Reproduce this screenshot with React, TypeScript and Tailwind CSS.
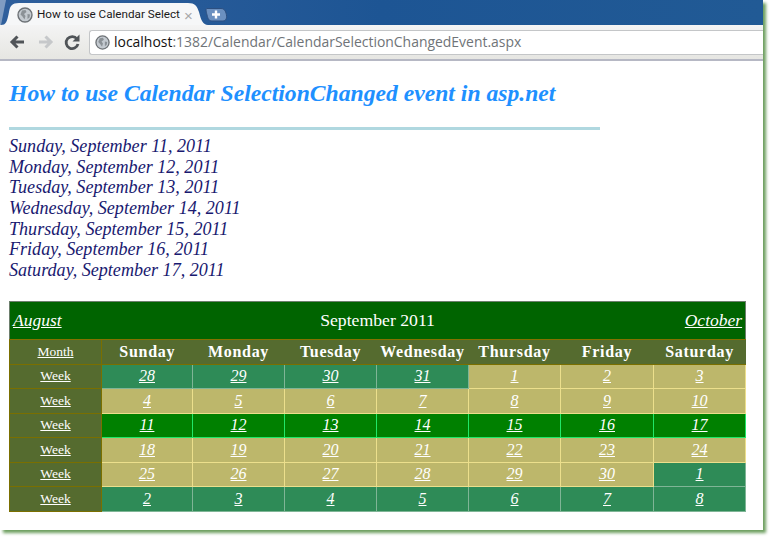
const dates = [
  "Sunday, September 11, 2011",
  "Monday, September 12, 2011",
  "Tuesday, September 13, 2011",
  "Wednesday, September 14, 2011",
  "Thursday, September 15, 2011",
  "Friday, September 16, 2011",
  "Saturday, September 17, 2011",
];

const days = ["Sunday", "Monday", "Tuesday", "Wednesday", "Thursday", "Friday", "Saturday"];

type Kind = "other" | "month" | "selected";

const weeks: { day: string; kind: Kind }[][] = [
  [
    { day: "28", kind: "other" },
    { day: "29", kind: "other" },
    { day: "30", kind: "other" },
    { day: "31", kind: "other" },
    { day: "1", kind: "month" },
    { day: "2", kind: "month" },
    { day: "3", kind: "month" },
  ],
  ["4", "5", "6", "7", "8", "9", "10"].map((day) => ({ day, kind: "month" as Kind })),
  ["11", "12", "13", "14", "15", "16", "17"].map((day) => ({ day, kind: "selected" as Kind })),
  ["18", "19", "20", "21", "22", "23", "24"].map((day) => ({ day, kind: "month" as Kind })),
  [
    { day: "25", kind: "month" },
    { day: "26", kind: "month" },
    { day: "27", kind: "month" },
    { day: "28", kind: "month" },
    { day: "29", kind: "month" },
    { day: "30", kind: "month" },
    { day: "1", kind: "other" },
  ],
  ["2", "3", "4", "5", "6", "7", "8"].map((day) => ({ day, kind: "other" as Kind })),
];

const cellStyles: Record<Kind, string> = {
  other: "bg-[#2e8b57] border-[#7fb596]",
  month: "bg-[#bdb76b] border-[#ecdf8c]",
  selected: "bg-[#008000] border-[#20e868]",
};

const Globe = ({ className }: { className: string }) => (
  <svg viewBox="0 0 16 16" className={className}>
    <circle cx="8" cy="8" r="7" fill="#c4cad0" stroke="#6d7276" strokeWidth="1.4" />
    <path d="M5 3.5 8.5 3 9.5 5 7 7 8.5 9 7.5 12.5 5.5 9.5 3.5 7.5Z" fill="#8b9196" />
    <path d="M10.5 7 13 7.5 12.5 10.5 10.5 12Z" fill="#8b9196" />
  </svg>
);

const BrowserChrome = () => (
  <div className="shrink-0">
    <div className="relative h-[25px] bg-gradient-to-r from-[#2f5f9c] via-[#1d5594] to-[#215a95]">
      <svg viewBox="0 0 230 25" className="absolute top-0 left-0 h-[25px] w-[230px]">
        <path d="M0 0H6L1 25H0Z" fill="#7f9cc2" />
        <path d="M1 25C6 25 7 22 9 12 10 6 12 3 19 3H188C195 3 197 6 199 12 201 20 203 25 208 25Z" fill="#f6f7f8" />
        <path d="M207 8.500H221C224 8.500 225 10 226 13 227.500 18 226 21 223 21H212C209 21 208 19 207 15 206 11 205.500 8.500 207 8.500Z" fill="#6b90c0" stroke="#2c4f80" />
        <path d="M216 10.500V18.500M212 14.500H220" stroke="#ffffff" strokeWidth="2.400" />
      </svg>
      <div className="absolute top-[5px] left-[17px] flex h-5 items-center gap-1">
        <Globe className="h-4 w-4" />
        <span className="w-[143px] text-[11.700px] whitespace-nowrap text-[#1a1a1a] [font-family:'Roboto',sans-serif]">
          How to use Calendar Select
        </span>
        <span className="text-[15px] leading-none text-[#a8a8a8] [font-family:'Liberation_Sans',sans-serif]">×</span>
      </div>
    </div>
    <div className="flex h-[36px] items-center border-b-2 border-[#b6b8c4] bg-gradient-to-b from-[#f4f4f4] to-[#e6e6e2]">
      <svg viewBox="0 0 80 20" className="ml-[8px] h-5 w-20 shrink-0">
        <path d="M16 10H4M9.500 4.500 4 10 9.500 15.500" fill="none" stroke="#505458" strokeWidth="3" />
        <path d="M31 10H43M37.500 4.500 43 10 37.500 15.500" fill="none" stroke="#c6c8ca" strokeWidth="3" />
        <path d="M69 7A6 6 0 1 0 70 12" fill="none" stroke="#505458" strokeWidth="2.800" />
        <path d="M71.500 2.500V9.500H64.500Z" fill="#505458" />
      </svg>
      <div className="ml-[1px] flex h-[25px] flex-1 items-center gap-1 rounded-l-[3px] border border-r-0 border-[#c4c6c8] bg-white pl-[5px]">
        <Globe className="h-[15px] w-[15px] shrink-0" />
        <span className="text-[13.940px] whitespace-nowrap text-[#6f7478] [font-family:'Open_Sans',sans-serif]">
          <span className="text-[#111]">localhost</span>:1382/Calendar/CalendarSelectionChangedEvent.aspx
        </span>
      </div>
    </div>
  </div>
);

const Calendar = () => (
  <table className="w-[736px] table-fixed border-collapse text-white [font-family:'Liberation_Serif',serif]">
    <colgroup>
      <col className="w-[92px]" />
      <col className="w-[91px]" />
      <col className="w-[92px]" />
      <col className="w-[92px]" />
      <col className="w-[92px]" />
      <col className="w-[92px]" />
      <col className="w-[93px]" />
      <col className="w-[92px]" />
    </colgroup>
    <tbody>
      <tr className="h-[38px] bg-[#006400]">
        <td colSpan={8} className="border border-[#6d7f6d] border-b-[#857000] p-0">
          <div className="grid grid-cols-3 items-center px-[3px] text-[17.500px] italic">
            <a className="justify-self-start underline">August</a>
            <span className="text-center text-[17.700px] not-italic">September 2011</span>
            <a className="justify-self-end underline">October</a>
          </div>
        </td>
      </tr>
      <tr className="h-[25px] bg-[#556b2f]">
        <td className="border border-[#7a6f00] p-0 text-center text-[13.500px] underline">Month</td>
        {days.map((d) => (
          <th key={d} className="border-y border-y-[#7a6f00] p-0 text-center text-[16px] font-bold tracking-[0.7px]">
            {d}
          </th>
        ))}
      </tr>
      {weeks.map((week, i) => (
        <tr key={i} className="h-[24.500px]">
          <td className="border border-[#7a6f00] bg-[#556b2f] p-0 text-center text-[13.500px] leading-[20px] underline">
            Week
          </td>
          {week.map((c, j) => (
            <td
              key={j}
              className={`border p-0 text-center text-[16px] leading-[20px] italic underline ${cellStyles[c.kind]}`}
            >
              {c.day}
            </td>
          ))}
        </tr>
      ))}
    </tbody>
  </table>
);

export default function App() {
  return (
    <div className="h-[539px] w-[776px] overflow-hidden bg-white">
      <div className="flex h-[530px] w-[763px] flex-col overflow-hidden bg-white shadow-[3px_3px_3px_#6d9f5f]">
        <BrowserChrome />
        <div className="flex-1 pt-[17px] pl-[9px] [font-family:'Liberation_Serif',serif]">
          <h1 className="text-[23.650px] leading-[30px] font-bold text-[#1e90ff] italic">
            How to use Calendar SelectionChanged event in asp.net
          </h1>
          <hr className="mt-[19px] h-[3px] w-[591px] border-0 bg-[#b0d8e0]" />
          <div className="mt-[6px] text-[18.100px] leading-[20.670px] text-[#191970] italic">
            {dates.map((d) => (
              <div key={d}>{d}</div>
            ))}
          </div>
          <div className="mt-[20px]">
            <Calendar />
          </div>
        </div>
      </div>
    </div>
  );
}
